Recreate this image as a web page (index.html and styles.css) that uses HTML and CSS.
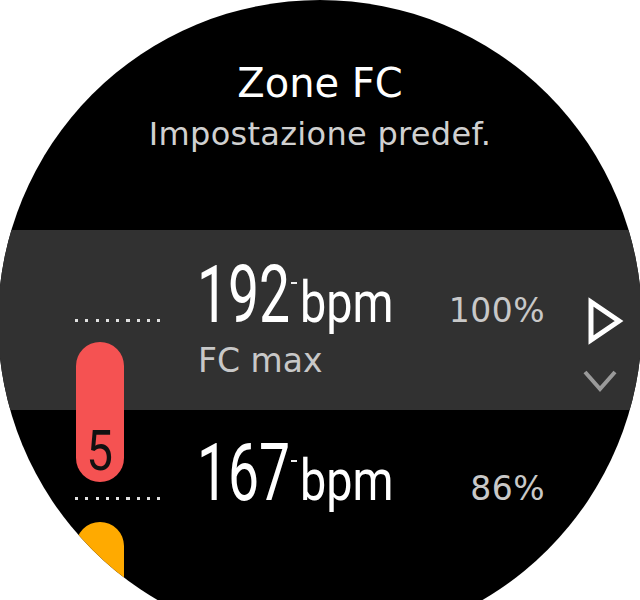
FILE: index.html
```html
<!DOCTYPE html>
<html lang="it">
<head>
<meta charset="utf-8">
<title>Zone FC</title>
<link rel="stylesheet" href="styles.css">
</head>
<body>
<div class="watch">
  <header class="head">
    <h1 class="title">Zone FC</h1>
    <p class="sub">Impostazione predef.</p>
  </header>
  <section class="band">
    <div class="zones">
      <div class="row">
        <div class="dots"></div>
        <div class="value"><span class="num">192</span><span class="sep"></span><span class="bpm">bpm</span></div>
        <div class="pct">100%</div>
      </div>
      <div class="label">FC max</div>
    </div>
    <div class="nav">
      <svg class="play" width="40" height="50" viewBox="0 0 40 50"><polygon points="5,6 5,44 33,25" fill="none" stroke="#fff" stroke-width="5" stroke-linejoin="miter"/></svg>
      <svg class="down" width="36" height="26" viewBox="0 0 36 26"><polyline points="3,4 18,21 33,4" fill="none" stroke="#9a9a9a" stroke-width="4"/></svg>
    </div>
  </section>
  <div class="row row2">
    <div class="dots"></div>
    <div class="value"><span class="num">167</span><span class="sep"></span><span class="bpm">bpm</span></div>
    <div class="pct">86%</div>
  </div>
  <div class="pill pill-red"><span class="zone-num">5</span></div>
  <div class="pill pill-yellow"></div>
</div>
</body>
</html>
```
FILE: styles.css
```css
html, body {
  margin: 0;
  padding: 0;
  width: 640px;
  height: 600px;
  overflow: hidden;
  background: #fff;
}
.watch {
  position: relative;
  width: 640px;
  height: 600px;
  clip-path: circle(322px at 320px 322px);
  overflow: hidden;
  background: #000;
  font-family: "DejaVu Sans", sans-serif;
  color: #fff;
}
.head {
  padding-top: 59px;
  text-align: center;
}
.title {
  margin: 0;
  font-weight: normal;
  font-size: 40px;
  line-height: 48px;
  color: #fff;
}
.sub {
  margin: 7px 0 0;
  font-size: 32px;
  line-height: 40px;
  color: #d0d0d0;
  letter-spacing: 0.3px;
}
.band {
  margin-top: 76px;
  height: 180px;
  background: #313131;
  display: flex;
}
.zones {
  flex: 1;
  padding-top: 25px;
  padding-left: 75px;
}
.row {
  display: flex;
  align-items: baseline;
}
.row2 {
  margin-top: 23px;
  padding-left: 75px;
  padding-right: 95px;
}
.dots {
  width: 86px;
  height: 3px;
  margin-right: 36px;
  background-image: repeating-linear-gradient(to right, #e0e0e0 0 3px, transparent 3px 10.3px);
}
.value {
  font-family: Roboto, sans-serif;
  font-size: 80px;
  line-height: 80px;
  white-space: nowrap;
}
.num {
  display: inline-block;
  transform: scaleX(0.69);
  transform-origin: 0 0;
  margin-right: -43px;
}
.sep {
  display: inline-block;
  width: 6px;
  height: 2.5px;
  background: #eee;
  vertical-align: 38px;
  margin: 0 3px 0 2px;
}
.bpm {
  display: inline-block;
  font-size: 57px;
  line-height: 1;
  transform: scaleX(0.82);
  transform-origin: 0 0;
  margin-right: -20px;
}
.pct {
  margin-left: auto;
  font-size: 33px;
  line-height: 40px;
  color: #c8c8c8;
  letter-spacing: 0.5px;
}
.label {
  margin-top: 6px;
  margin-left: 123px;
  font-size: 33px;
  line-height: 40px;
  color: #c8c8c8;
}
.nav {
  width: 95px;
  padding-top: 66px;
}
.play {
  display: block;
  margin-left: 41px;
}
.down {
  display: block;
  margin-top: 22px;
  margin-left: 37px;
}
.pill {
  position: absolute;
  left: 76px;
  width: 48px;
  border-radius: 24px;
}
.pill-red {
  top: 342px;
  height: 140px;
  background: #f55252;
  display: flex;
  flex-direction: column;
  justify-content: flex-end;
  align-items: center;
  padding-bottom: 3px;
  box-sizing: border-box;
}
.pill-yellow {
  top: 522px;
  height: 160px;
  background: #ffaa00;
}
.zone-num {
  font-family: Roboto, sans-serif;
  font-size: 56px;
  line-height: 1;
  color: #111;
  display: inline-block;
  transform: scaleX(0.85);
}
```
